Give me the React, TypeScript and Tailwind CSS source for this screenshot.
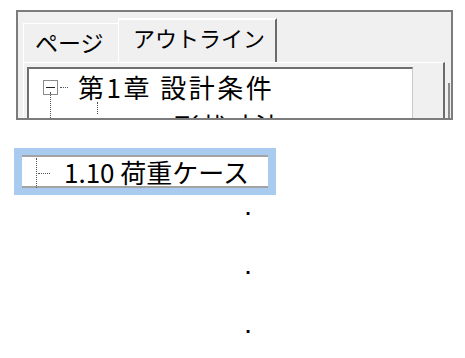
import React from 'react';

const jp = { fontFamily: '"Noto Sans CJK JP", "Noto Sans", sans-serif' };

function Dot() {
  return (
    <div className="flex h-[3px]">
      <div className="w-[1px] bg-[#e8a040]" />
      <div className="w-[2px] bg-black" />
      <div className="w-[1px] bg-[#3c8ce8]" />
    </div>
  );
}

export default function App() {
  return (
    <div className="w-[465px] h-[358px] bg-white overflow-hidden text-black" style={jp}>
      {/* Outline pane */}
      <div className="ml-[16px] mt-[10px] w-[437px] h-[110px] border-2 border-[#7c7c7c] bg-[#f0f0f0] overflow-hidden relative">
        <div className="absolute left-[430px] top-[71px] w-[2px] h-[60px] bg-[#8a8a8a]" />
        {/* Tabs */}
        <div className="flex items-end pl-[5px] pt-[6px] h-[50px]">
          <div className="w-[95px] h-[39px] border-t border-l border-white bg-[#f0f0f0] pl-[11px] pt-[3px] text-[23px] leading-[30px]">
            ページ
          </div>
          <div className="w-[159px] h-[44px] border-t-2 border-l border-white border-r-2 border-r-[#6b6b6b] bg-[#f0f0f0] pl-[14px] pt-[2px] text-[22px] leading-[30px]">
            アウトライン
          </div>
        </div>
        {/* Panel */}
        <div className="ml-[5px] w-[422px] h-[80px] border-t border-l border-white border-r-2 border-r-[#6b6b6b] pl-[3px] pt-[4px]">
          <div className="relative w-[386px] h-[80px] bg-white border-t-2 border-l-2 border-[#6e6e6e] border-r border-r-[#c8c8c8]">
            {/* connectors */}
            <div className="absolute left-[21px] top-[23px] h-[40px] border-l border-dotted border-[#555]" />
            <div className="absolute left-[68px] top-[33px] h-[12px] border-l border-dotted border-[#555]" />
            <div className="flex items-center pl-[14px] pt-[6px] h-[30px]">
              <div className="w-[15px] h-[15px] border border-[#8a8a8a] flex items-center justify-center">
                <div className="w-[9px] h-[1px] bg-[#222]" />
              </div>
              <div className="ml-[2px] w-[8px] border-t border-dotted border-[#555]" />
              <span className="ml-[10px] text-[26px] leading-none tracking-[2.5px]">第1章 設計条件</span>
            </div>
            <div className="flex items-center pl-[59px] pt-[14px]">
              <div className="w-[20px] h-[16px] border border-[#8a8a8a]" />
              <span className="ml-[20px] text-[26px] leading-none tracking-[1px]">1.1 形状寸法</span>
            </div>
          </div>
        </div>
      </div>

      {/* Selected item */}
      <div className="ml-[14px] mt-[28px] w-[262px] h-[47px] bg-[#a9cbef] pl-[8px] pr-[8px] pt-[7px]">
        <div className="relative h-[33px] bg-white border-t-2 border-b-2 border-[#a3a3a3] flex items-center">
          <div className="absolute left-[14px] top-[1px] h-[30px] border-l border-dotted border-[#555]" />
          <div className="absolute left-[16px] top-[16px] w-[12px] border-t border-dotted border-[#555]" />
          <span className="ml-[42px] text-[26px] leading-none">1.10 荷重ケース</span>
        </div>
      </div>

      {/* Dots */}
      <div className="ml-[246px] mt-[17px] flex flex-col gap-[56px]">
        <Dot />
        <Dot />
        <Dot />
      </div>
    </div>
  );
}
